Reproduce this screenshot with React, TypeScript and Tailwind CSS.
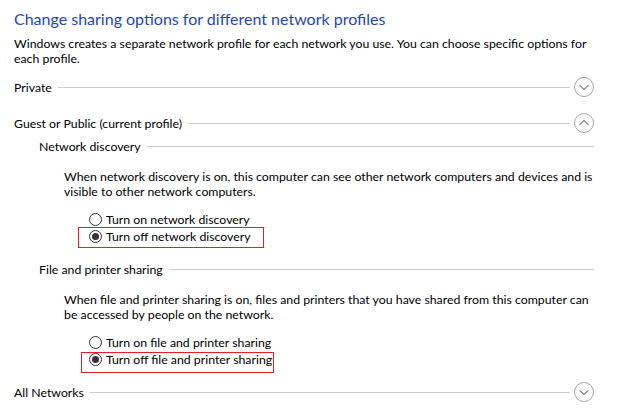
import React from 'react';

type ToggleProps = { open: boolean };

const Toggle = ({ open }: ToggleProps) => (
  <svg width="20" height="20" viewBox="0 0 20 20" className="ml-[4px] shrink-0">
    <circle cx="10" cy="10" r="9.5" fill="none" stroke="#a3a3a3" strokeWidth="1" />
    <path
      d={open ? 'M5.5 11.8 L10 7.5 L14.5 11.8' : 'M5.5 8.2 L10 12.5 L14.5 8.2'}
      fill="none"
      stroke="#8c8c8c"
      strokeWidth="1.3"
    />
  </svg>
);

interface HeaderProps {
  label: string;
  indent: 'profile' | 'section';
  toggle?: 'open' | 'closed';
}

const Header = ({ label, indent, toggle }: HeaderProps) => (
  <div className={`flex h-[20px] items-center pr-[30px] ${indent === 'profile' ? 'pl-[14px]' : 'pl-[39px]'}`}>
    <span className="whitespace-nowrap">{label}</span>
    <div className="ml-[6px] h-px flex-1 bg-[#cdcdcd]" />
    {toggle && <Toggle open={toggle === 'open'} />}
  </div>
);

const Radio = ({ label, checked }: { label: string; checked?: boolean }) => (
  <div className="flex h-[17px] items-center pl-[89px]">
    <span className="flex h-[13px] w-[13px] items-center justify-center rounded-full border border-[#333333] bg-white">
      {checked && <span className="h-[7px] w-[7px] rounded-full bg-[#333333]" />}
    </span>
    <span className="ml-[4px] whitespace-nowrap">{label}</span>
  </div>
);

// red annotation box drawn around the selected option
const Highlight = ({ className }: { className: string }) => (
  <div className={`pointer-events-none absolute h-[21px] border border-solid border-[#ec1c24] ${className}`} />
);

export default function App() {
  return (
    <div className="relative h-[410px] w-[624px] overflow-hidden bg-white font-['Lato',sans-serif] text-[12.3px] leading-[15px] text-black">
      {/* Page heading */}
      <h1 className="mt-[8px] pl-[14px] text-[16px] leading-[22px] font-normal text-[#2348b5] whitespace-nowrap">
        Change sharing options for different network profiles
      </h1>
      <p className="mt-[6px] pl-[14px] whitespace-nowrap">
        Windows creates a separate network profile for each network you use. You can choose specific options for
        <br />
        each profile.
      </p>

      <div className="mt-[11px]">
        <Header label="Private" indent="profile" toggle="closed" />
      </div>

      <div className="mt-[16px]">
        <Header label="Guest or Public (current profile)" indent="profile" toggle="open" />
      </div>

      {/* Network discovery */}
      <div className="mt-[3px]">
        <Header label="Network discovery" indent="section" />
      </div>
      <p className="mt-[13px] pl-[64px] whitespace-nowrap">
        When network discovery is on, this computer can see other network computers and devices and is
        <br />
        visible to other network computers.
      </p>
      <div className="relative mt-[12px]">
        <Radio label="Turn on network discovery" />
        <Radio label="Turn off network discovery" checked />
        <Highlight className="left-[78px] top-[16px] w-[186px]" />
      </div>

      {/* File and printer sharing */}
      <div className="mt-[14px]">
        <Header label="File and printer sharing" indent="section" />
      </div>
      <p className="mt-[13px] pl-[64px] whitespace-nowrap">
        When file and printer sharing is on, files and printers that you have shared from this computer can
        <br />
        be accessed by people on the network.
      </p>
      <div className="relative mt-[12px]">
        <Radio label="Turn on file and printer sharing" />
        <Radio label="Turn off file and printer sharing" checked />
        <Highlight className="left-[81px] top-[18px] w-[193px]" />
      </div>

      <div className="mt-[14px]">
        <Header label="All Networks" indent="profile" toggle="closed" />
      </div>
    </div>
  );
}
